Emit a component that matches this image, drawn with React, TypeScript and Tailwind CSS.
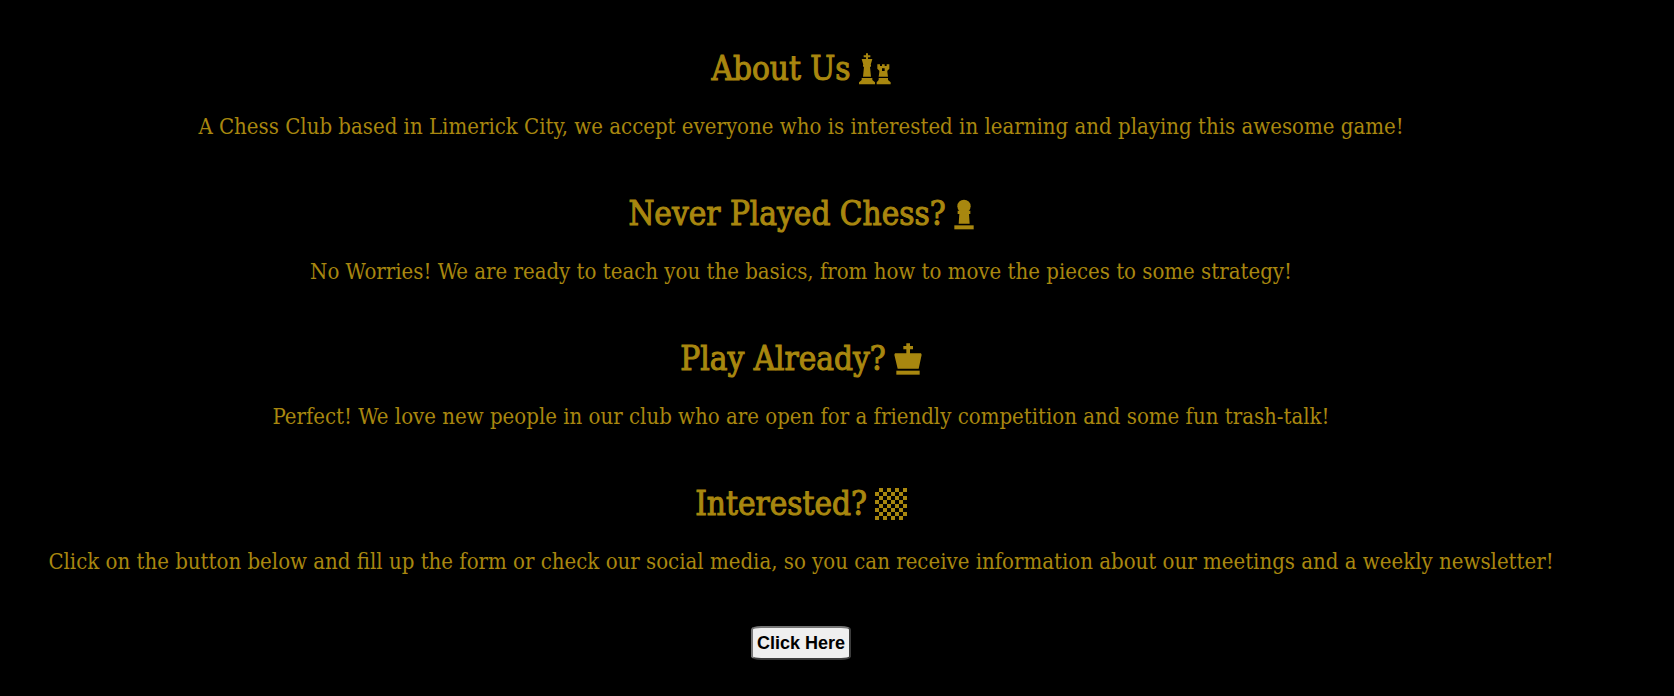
import type { ReactNode } from "react";

function KingAndRook() {
  return (
    <svg viewBox="0 0 96 96" className="size-8" fill="currentColor" aria-hidden="true">
      <path d="M21 1h6v6h7v6h-7v5h13l-5 17h1v6h-3l3 30H12l3-30h-3v-6h1L8 18h13v-5h-7V7h7z" />
      <path d="M8 75h32v6l8 7v6H0v-6l8-7z" />
      <path d="M55 34h8v5h6v-5h8v5h6v-5h8v13l-6 6v4l2 14H59l2-14v-4l-6-6z M69 46v8h8v-8z" fillRule="evenodd" />
      <path d="M59 75h28v6l8 7v6H53v-6l6-7z" />
    </svg>
  );
}

function Pawn() {
  return (
    <svg viewBox="0 0 60 96" className="h-8 w-5" fill="currentColor" aria-hidden="true">
      <circle cx="30" cy="25" r="20" />
      <path d="M11 38h38v10h-4l2 29H14l2-29h-5z" />
      <path d="M1 82h58v12H1z" />
    </svg>
  );
}

function King() {
  return (
    <svg viewBox="0 0 84 96" className="h-8 w-7" fill="currentColor" aria-hidden="true">
      <path d="M37 1h11v8h9v10h-9v12h33l2 4-9 42H11L1 35l2-4h34V19h-9V9h9z" />
      <path d="M7 83h70v12H7z" />
    </svg>
  );
}

function Board() {
  const cells = Array.from({ length: 64 }, (_, i) => [i % 8, Math.floor(i / 8)]).filter(
    ([x, y]) => (x + y) % 2 === 1,
  );
  return (
    <svg viewBox="0 0 8 8" className="size-8" fill="currentColor" shapeRendering="crispEdges" aria-hidden="true">
      {cells.map(([x, y]) => (
        <rect key={`${x}-${y}`} x={x} y={y} width="1" height="1" />
      ))}
    </svg>
  );
}

function Section({ title, icon, children }: { title: string; icon: ReactNode; children: ReactNode }) {
  return (
    <section className="flex flex-col items-center gap-5">
      <h2 className="flex items-center gap-2 text-[33px] leading-11 font-normal [-webkit-text-stroke:1px_currentColor]">
        {title}
        {icon}
      </h2>
      <p className="text-[22px] leading-8">{children}</p>
    </section>
  );
}

export default function App() {
  return (
    <main className="flex min-h-screen flex-col items-center gap-12 bg-black pt-[47px] pr-[72px] pb-9 text-center font-['DejaVu_Serif_Condensed','DejaVu_Serif',serif] text-[#a8870f]">
      <div className="flex flex-col gap-[49px]">
        <Section title="About Us" icon={<KingAndRook />}>
          A Chess Club based in Limerick City, we accept everyone who is interested in learning and playing this awesome game!
        </Section>
        <Section title="Never Played Chess?" icon={<Pawn />}>
          No Worries! We are ready to teach you the basics, from how to move the pieces to some strategy!
        </Section>
        <Section title="Play Already?" icon={<King />}>
          Perfect! We love new people in our club who are open for a friendly competition and some fun trash-talk!
        </Section>
        <Section title="Interested?" icon={<Board />}>
          Click on the button below and fill up the form or check our social media, so you can receive information about our meetings and a weekly newsletter!
        </Section>
      </div>
      <button
        type="button"
        className="rounded-[10%] border-2 border-t-[#767676] border-r-[#3c3c3c] border-b-[#3c3c3c] border-l-[#767676] bg-[#efefef] px-1 font-['Liberation_Sans',sans-serif] text-[18px] leading-[30px] font-bold text-black"
      >
        Click Here
      </button>
    </main>
  );
}
